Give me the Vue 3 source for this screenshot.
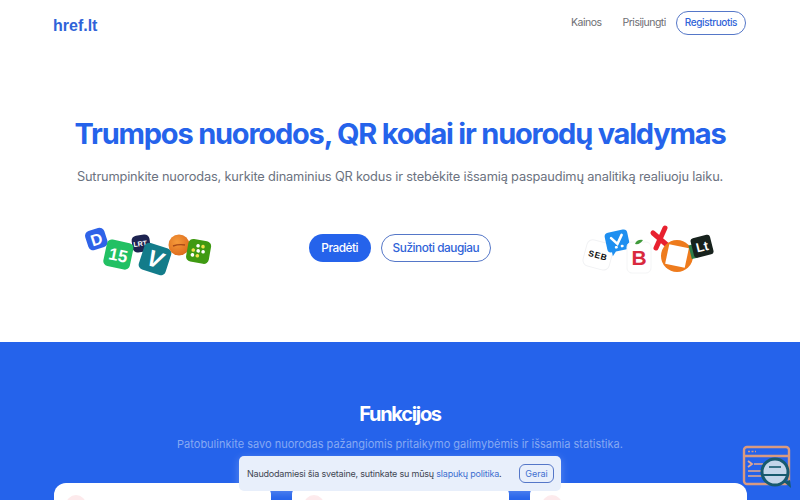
<script setup>
const navLinks = ['Kainos', 'Prisijungti']
const cards = [1, 2, 3]
</script>
<template>
    <div class="page">
        <header class="topbar">
            <a class="brand">href.lt</a>
            <nav class="nav">
                <a v-for="link in navLinks" :key="link" class="nav-link">{{ link }}</a>
                <a class="nav-register">Registruotis</a>
            </nav>
        </header>

        <section class="hero">
            <h1>Trumpos nuorodos, QR kodai ir nuorodų valdymas</h1>
            <p class="lead">Sutrumpinkite nuorodas, kurkite dinaminius QR kodus ir stebėkite išsamią paspaudimų analitiką realiuoju laiku.</p>
            <div class="hero-row">
                <svg class="logos" width="130" height="60" viewBox="0 -8 130 60">
                    <defs>
                        <radialGradient id="ball" cx="0.4" cy="0.35" r="0.7">
                            <stop offset="0" stop-color="#f59a3a"/>
                            <stop offset="1" stop-color="#dd6a1c"/>
                        </radialGradient>
                    </defs>
                    <g transform="translate(0 -1) rotate(-18 13 13)">
                        <rect x="3" y="4" width="20" height="20" rx="5" fill="#2f63e8"/>
                        <text x="13" y="20" text-anchor="middle" class="logo-text" font-size="16" fill="#fff">D</text>
                    </g>
                    <g transform="rotate(-8 58 17)">
                        <rect x="49" y="9" width="18" height="17" rx="5" fill="#1d2350"/>
                        <text x="57" y="20" text-anchor="middle" class="logo-text" font-size="7" fill="#fff">LRT</text>
                    </g>
                    <g transform="rotate(12 35 28)">
                        <rect x="22" y="15" width="27" height="27" rx="5" fill="#22c063"/>
                        <text x="35.5" y="35" text-anchor="middle" class="logo-text" font-size="17" fill="#fff">15</text>
                    </g>
                    <g transform="translate(0 -5) rotate(18 72 38)">
                        <rect x="58" y="24" width="28" height="28" rx="5" fill="#137c8a"/>
                        <text x="72" y="46" text-anchor="middle" class="logo-italic" font-size="23" fill="#fff">V</text>
                    </g>
                    <circle cx="96" cy="19" r="10.5" fill="url(#ball)"/>
                    <path d="M90 20q6-2 12-1" fill="none" stroke="#a84a18" stroke-width="1.4"/>
                    <g transform="rotate(10 116 26)">
                        <rect x="104" y="14" width="23" height="23" rx="5" fill="#3f9a12"/>
                        <circle cx="114" cy="20" r="1.8" fill="#fff"/>
                        <circle cx="119" cy="20" r="1.8" fill="#f2e14c"/>
                        <circle cx="110" cy="25" r="1.8" fill="#f2e14c"/>
                        <circle cx="115" cy="25" r="1.8" fill="#fff"/>
                        <circle cx="120" cy="25" r="1.8" fill="#fff"/>
                        <circle cx="110" cy="30" r="1.8" fill="#fff"/>
                        <circle cx="115" cy="30" r="1.8" fill="#f2e14c"/>
                    </g>
                </svg>

                <div class="actions">
                    <a class="btn btn-solid">Pradėti</a>
                    <a class="btn btn-outline">Sužinoti daugiau</a>
                </div>

                <svg class="logos logos-right" width="135" height="60" viewBox="3 0 135 60">
                    <g transform="translate(2.5 2.5) rotate(15 17 35)">
                        <rect x="3" y="21" width="27" height="27" rx="6" fill="#fff" stroke="#f1f2f4"/>
                        <text x="16.5" y="38" text-anchor="middle" class="logo-text seb" font-size="8.5" fill="#111">SEB</text>
                    </g>
                    <g transform="translate(3 4) rotate(-12 35 20)">
                        <path d="M28 9h15a4 4 0 0 1 4 4v12a4 4 0 0 1-4 4h-11l-4 4v-4a4 4 0 0 1-4-4v-12a4 4 0 0 1 4-4z" fill="#1e8ff0"/>
                        <path d="M30 15l5 7 6-8M33 25h.5M39 25h.5" fill="none" stroke="#fff" stroke-width="2.6" stroke-linecap="round"/>
                    </g>
                    <rect x="48" y="24" width="24" height="31" rx="5" fill="#fff" stroke="#f4f5f6"/>
                    <path d="M56 26q2-5 8-4q-3 5-8 4z" fill="#3f9a3a"/>
                    <text x="60" y="47" text-anchor="middle" class="logo-text" font-size="21" fill="#d9293e">B</text>
                    <path d="M74 15L88 27M86 10L77 30" fill="none" stroke="#e8212f" stroke-width="5" stroke-linecap="round"/>
                    <circle cx="98" cy="38" r="16" fill="#ee7b1d"/>
                    <rect x="88" y="28" width="20" height="20" fill="#fff" transform="rotate(12 98 38)"/>
                    <g transform="translate(2 8) rotate(-14 122 20)">
                        <path d="M108 16h6v14h-6z" fill="#2c7d4a"/>
                        <rect x="111" y="10" width="20" height="20" rx="3" fill="#17221d"/>
                        <text x="121" y="25" text-anchor="middle" class="logo-text" font-size="13" fill="#fff">Lt</text>
                    </g>
                </svg>
            </div>
        </section>

        <section class="features">
            <h2>Funkcijos</h2>
            <p class="sub">Patobulinkite savo nuorodas pažangiomis pritaikymo galimybėmis ir išsamia statistika.</p>
            <div class="cards">
                <div v-for="c in cards" :key="c" class="card">
                    <span class="card-icon"></span>
                </div>
            </div>
        </section>

        <div class="cookie">
            <span class="cookie-text">Naudodamiesi šia svetaine, sutinkate su mūsų <a class="cookie-link">slapukų politika</a>.</span>
            <button class="cookie-btn">Gerai</button>
        </div>

        <svg class="widget" width="50" height="44" viewBox="0 0 50 44">
            <rect x="2" y="2" width="45" height="37" rx="3" fill="#2563eb" stroke="#d99a80" stroke-width="2.4"/>
            <path d="M2 11h45" stroke="#d99a80" stroke-width="2.4"/>
            <path d="M6 6.5h8" stroke="#d99a80" stroke-width="1.5" stroke-dasharray="2 1.5"/>
            <path d="M6 16l4 3-4 3" fill="none" stroke="#e8a98c" stroke-width="1.8"/>
            <path d="M12 19h9M6 26h14M6 31h14" stroke="#e8a98c" stroke-width="1.6"/>
            <circle cx="33" cy="27" r="13" fill="#c3d6ea" stroke="#175a6e" stroke-width="3"/>
            <path d="M27 22h12" stroke="#175a6e" stroke-width="1.6"/>
            <path d="M21 30h24" stroke="#175a6e" stroke-width="2"/>
            <path d="M42 37l7 6-1-8z" fill="#175a6e"/>
        </svg>
    </div>
</template>
<style scoped>
.page {
    position: relative;
    height: 500px;
    overflow: hidden;
    background: #fff;
    font-family: "Inter", "Liberation Sans", sans-serif;
}
.topbar {
    display: flex;
    justify-content: space-between;
    align-items: center;
    height: 45px;
    padding: 0 54px 0 53px;
}
.brand {
    font-family: "Liberation Sans", sans-serif;
    font-size: 16px;
    font-weight: 700;
    color: #2f63d8;
    margin-top: 6px;
}
.nav {
    display: flex;
    align-items: center;
    gap: 21px;
}
.nav-link {
    font-size: 10.5px;
    letter-spacing: -0.5px;
    color: #6e6e73;
}
.nav-register {
    margin-left: -11px;
    padding: 0 8px;
    height: 22px;
    line-height: 21px;
    border: 1px solid #5577c8;
    border-radius: 12px;
    font-size: 10px;
    letter-spacing: -0.4px;
    font-weight: 500;
    color: #2f63d8;
}
.hero {
    height: 297px;
    padding-top: 72px;
    box-sizing: border-box;
    text-align: center;
}
h1 {
    margin: 0;
    font-size: 29px;
    line-height: 34px;
    font-weight: 700;
    letter-spacing: -1.2px;
    color: #2563eb;
}
.lead {
    margin: 16px 0 0;
    font-size: 12.8px;
    letter-spacing: -0.16px;
    line-height: 20px;
    color: #6b7280;
}
.hero-row {
    display: grid;
    grid-template-columns: 1fr auto 1fr;
    align-items: center;
    margin-top: 31px;
    padding: 0 83px;
}
.logos {
    display: block;
}
.logos-right {
    justify-self: end;
}
.logo-text {
    font-family: "Liberation Sans", sans-serif;
    font-weight: 700;
}
.seb {
    letter-spacing: 0.8px;
}
.logo-italic {
    font-family: "Liberation Sans", sans-serif;
    font-weight: 700;
    font-style: italic;
}
.actions {
    display: flex;
    gap: 10px;
}
.btn {
    padding: 0 12px;
    height: 28px;
    line-height: 28px;
    border-radius: 15px;
    font-size: 11.8px;
    letter-spacing: -0.45px;
    font-weight: 500;
}
.btn-solid {
    padding: 0 12.5px;
    background: #2563eb;
    color: #fff;
}
.btn-outline {
    height: 26px;
    line-height: 26px;
    padding: 0 11px;
    border: 1px solid #5577c8;
    color: #2f63d8;
}
.features {
    height: 158px;
    background: #2563eb;
    text-align: center;
    padding-top: 60px;
    box-sizing: border-box;
}
h2 {
    margin: 0;
    font-size: 20px;
    line-height: 24px;
    font-weight: 700;
    letter-spacing: -1.3px;
    color: #fff;
}
.sub {
    margin: 9px 0 0;
    font-size: 11px;
    line-height: 18px;
    color: #86a9f3;
}
.cards {
    display: grid;
    grid-template-columns: repeat(3, 217px);
    gap: 21px;
    justify-content: center;
    margin-top: 30px;
}
.card {
    height: 120px;
    background: #fff;
    border-radius: 12px;
    padding: 12px;
    box-sizing: border-box;
}
.card-icon {
    display: block;
    width: 20px;
    height: 20px;
    border-radius: 50%;
    background: #fdeaec;
}
.cookie {
    position: absolute;
    left: 239px;
    top: 456px;
    width: 322px;
    height: 35px;
    box-sizing: border-box;
    display: flex;
    justify-content: space-between;
    align-items: center;
    padding: 0 7px 0 8px;
    background: #e8effb;
    border-radius: 5px;
    box-shadow: 0 2px 8px rgba(255, 255, 255, 0.25);
}
.cookie-text {
    font-size: 9px;
    letter-spacing: -0.2px;
    white-space: nowrap;
    color: #3f4652;
}
.cookie-link {
    color: #3f6fd0;
}
.cookie-btn {
    height: 19px;
    width: 35px;
    padding: 0;
    border: 1px solid #5577c8;
    border-radius: 6px;
    background: transparent;
    font-family: inherit;
    font-size: 9px;
    color: #3f6fd0;
}
.widget {
    position: absolute;
    left: 742px;
    top: 445px;
}
</style>
